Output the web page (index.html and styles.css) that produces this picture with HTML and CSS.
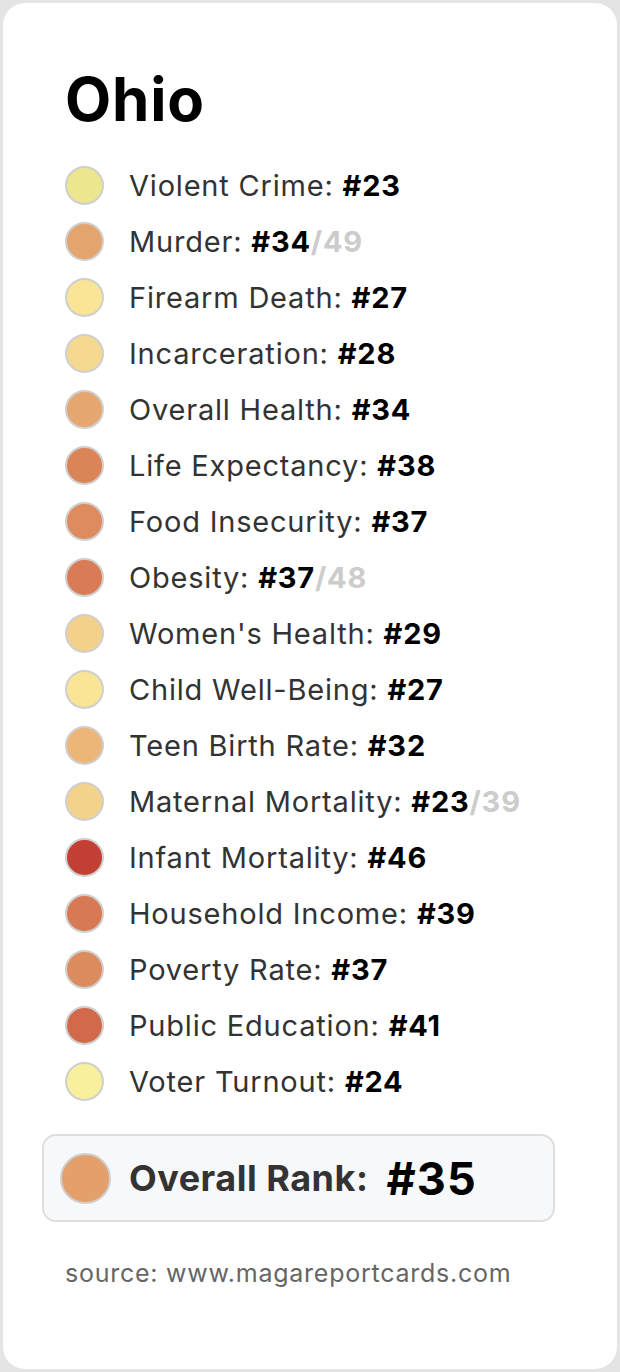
FILE: index.html
```html
<!DOCTYPE html>
<html lang="en">
<head>
<meta charset="utf-8">
<title>Ohio</title>
<link rel="stylesheet" href="styles.css">
</head>
<body>
<div class="card">
  <h1 class="title">Ohio</h1>
  <ul class="list">
    <li class="row"><span class="dot" style="background:#ece68f"></span><span class="label">Violent Crime: <b>#23</b></span></li>
    <li class="row"><span class="dot" style="background:#e3a46d"></span><span class="label">Murder: <b>#34</b><b class="of">/49</b></span></li>
    <li class="row"><span class="dot" style="background:#fae596"></span><span class="label">Firearm Death: <b>#27</b></span></li>
    <li class="row"><span class="dot" style="background:#f6d991"></span><span class="label">Incarceration: <b>#28</b></span></li>
    <li class="row"><span class="dot" style="background:#e6a670"></span><span class="label">Overall Health: <b>#34</b></span></li>
    <li class="row"><span class="dot" style="background:#da8458"></span><span class="label">Life Expectancy: <b>#38</b></span></li>
    <li class="row"><span class="dot" style="background:#dd8b5f"></span><span class="label">Food Insecurity: <b>#37</b></span></li>
    <li class="row"><span class="dot" style="background:#d97c55"></span><span class="label">Obesity: <b>#37</b><b class="of">/48</b></span></li>
    <li class="row"><span class="dot" style="background:#f3d18b"></span><span class="label">Women's Health: <b>#29</b></span></li>
    <li class="row"><span class="dot" style="background:#fae596"></span><span class="label">Child Well-Being: <b>#27</b></span></li>
    <li class="row"><span class="dot" style="background:#ebb678"></span><span class="label">Teen Birth Rate: <b>#32</b></span></li>
    <li class="row"><span class="dot" style="background:#f3d38c"></span><span class="label">Maternal Mortality: <b>#23</b><b class="of">/39</b></span></li>
    <li class="row"><span class="dot" style="background:#c33f33"></span><span class="label">Infant Mortality: <b>#46</b></span></li>
    <li class="row"><span class="dot" style="background:#d77a54"></span><span class="label">Household Income: <b>#39</b></span></li>
    <li class="row"><span class="dot" style="background:#dc8b5e"></span><span class="label">Poverty Rate: <b>#37</b></span></li>
    <li class="row"><span class="dot" style="background:#d2694b"></span><span class="label">Public Education: <b>#41</b></span></li>
    <li class="row"><span class="dot" style="background:#f8f09c"></span><span class="label">Voter Turnout: <b>#24</b></span></li>
  </ul>
  <div class="overall">
    <span class="dot big" style="background:#e3a06a"></span>
    <span class="overall-label">Overall Rank:</span>
    <span class="overall-rank">#35</span>
  </div>
  <p class="source">source: www.magareportcards.com</p>
</div>
</body>
</html>
```

FILE: styles.css
```css
* { box-sizing: border-box; }
html, body { margin: 0; padding: 0; }
body {
  background: #e4e4e4;
  padding: 3px;
  font-family: Inter, "Noto Sans", "Liberation Sans", sans-serif;
}
.card {
  background: #ffffff;
  border-radius: 22px;
  min-height: 1366px;
  padding: 64px 62px 0 62px;
}
.title {
  margin: 0 0 26px 0;
  font-size: 60px;
  line-height: 64px;
  font-weight: 700;
  color: #000;
  letter-spacing: 0.8px;
}
.list {
  list-style: none;
  margin: 0;
  padding: 0;
}
.row {
  display: flex;
  align-items: center;
  gap: 25px;
  height: 56px;
}
.dot {
  flex: none;
  width: 39px;
  height: 39px;
  border-radius: 50%;
  border: 2px solid #cfcfcf;
}
.label {
  font-size: 29px;
  letter-spacing: 0.8px;
  color: #333;
  white-space: nowrap;
}
.label b { color: #000; font-weight: 700; }
.label b.of { color: #cccccc; }
.overall {
  margin: 25px 0 0 -23px;
  width: 513px;
  height: 88px;
  background: #f7f8fa;
  border: 2px solid #dedede;
  border-radius: 14px;
  display: flex;
  align-items: center;
  padding-left: 16px;
}
.dot.big {
  width: 51px;
  height: 51px;
}
.overall-label {
  margin-left: 18px;
  font-size: 36px;
  letter-spacing: 0.5px;
  font-weight: 700;
  color: #333;
}
.overall-rank {
  margin-left: 18px;
  font-size: 45px;
  letter-spacing: 1.2px;
  font-weight: 700;
  color: #000;
}
.source {
  margin: 36px 0 0 0;
  font-size: 25px;
  letter-spacing: 0.75px;
  color: #666;
}
```
